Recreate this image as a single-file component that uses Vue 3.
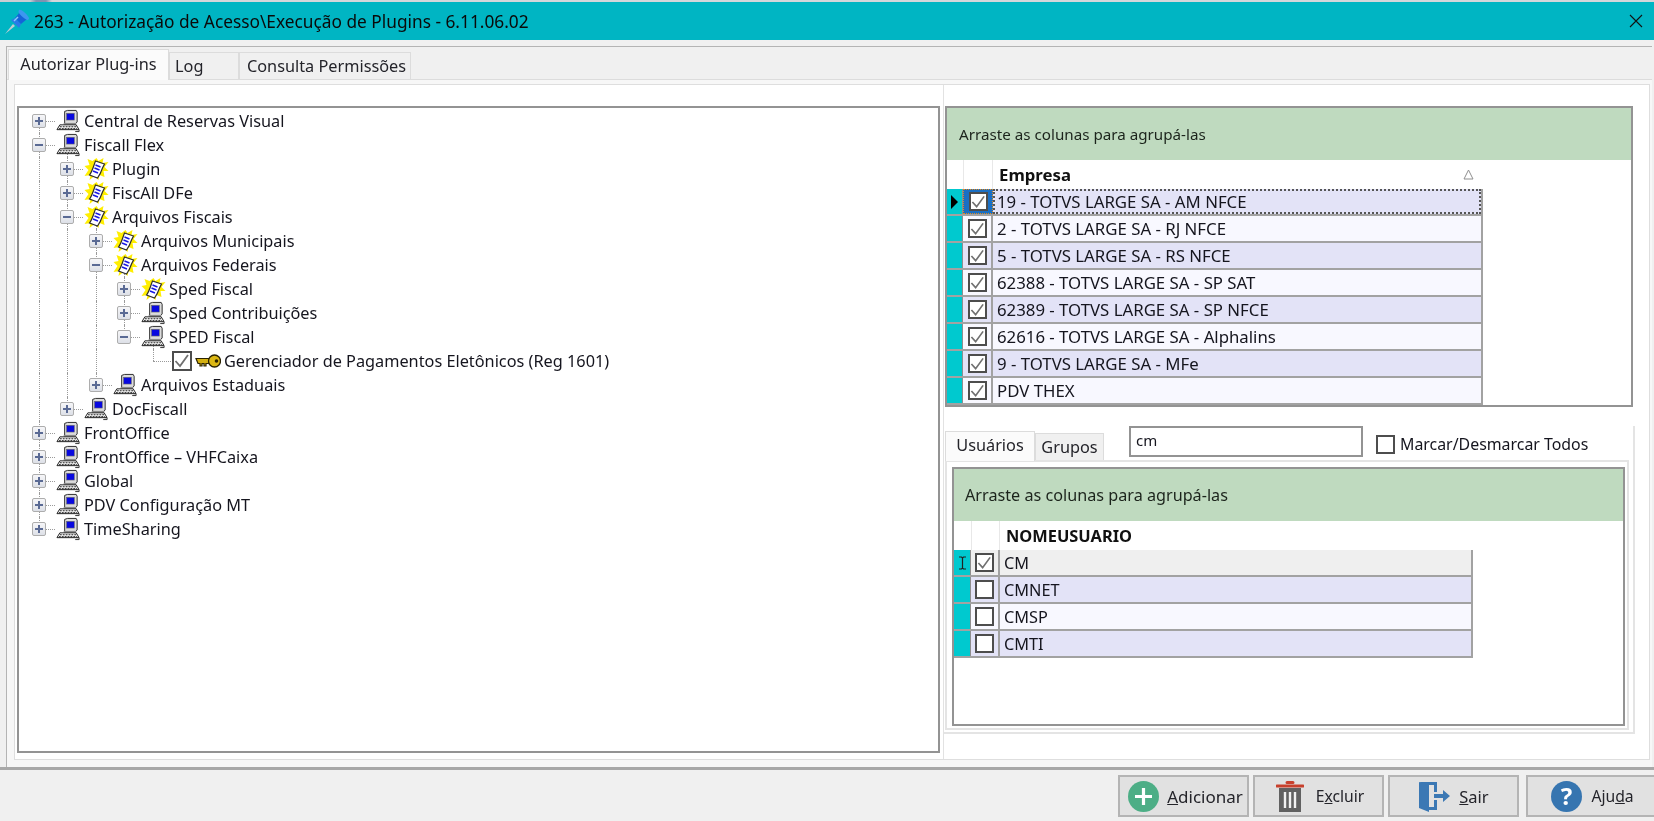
<script setup>
import { computed } from 'vue'

// level, label, icon, state: '+' closed, '-' open, 'leaf' = checkbox + key
const nodes = [
  { level: 0, label: 'Central de Reservas Visual', icon: 'pc', state: '+' },
  { level: 0, label: 'Fiscall Flex', icon: 'pc', state: '-' },
  { level: 1, label: 'Plugin', icon: 'doc', state: '+' },
  { level: 1, label: 'FiscAll DFe', icon: 'doc', state: '+' },
  { level: 1, label: 'Arquivos Fiscais', icon: 'doc', state: '-' },
  { level: 2, label: 'Arquivos Municipais', icon: 'doc', state: '+' },
  { level: 2, label: 'Arquivos Federais', icon: 'doc', state: '-' },
  { level: 3, label: 'Sped Fiscal', icon: 'doc', state: '+' },
  { level: 3, label: 'Sped Contribuições', icon: 'pc', state: '+' },
  { level: 3, label: 'SPED Fiscal', icon: 'pc', state: '-' },
  { level: 4, label: 'Gerenciador de Pagamentos Eletônicos (Reg 1601)', icon: 'key', state: 'leaf' },
  { level: 2, label: 'Arquivos Estaduais', icon: 'pc', state: '+' },
  { level: 1, label: 'DocFiscall', icon: 'pc', state: '+' },
  { level: 0, label: 'FrontOffice', icon: 'pc', state: '+' },
  { level: 0, label: 'FrontOffice – VHFCaixa', icon: 'pc', state: '+' },
  { level: 0, label: 'Global', icon: 'pc', state: '+' },
  { level: 0, label: 'PDV Configuração MT', icon: 'pc', state: '+' },
  { level: 0, label: 'TimeSharing', icon: 'pc', state: '+' }
]

const levelX = (l) => Math.floor(20 + 28.5 * l)

const hasNextSibling = (i, level) => {
  for (let j = i + 1; j < nodes.length; j++) {
    if (nodes[j].level < level) return false
    if (nodes[j].level === level) return true
  }
  return false
}

const rows = computed(() =>
  nodes.map((n, i) => {
    const guides = []
    for (let l = 0; l < n.level; l++) {
      if (hasNextSibling(i, l)) guides.push({ x: levelX(l), top: 0, h: 24 })
    }
    const next = hasNextSibling(i, n.level)
    guides.push({ x: levelX(n.level), top: i === 0 ? 12 : 0, h: next ? (i === 0 ? 12 : 24) : 12 })
    if (n.state === '-') guides.push({ x: levelX(n.level + 1), top: 12, h: 12 })
    return {
      ...n,
      guides,
      hx: levelX(n.level),
      hw: n.state === 'leaf' ? 20 : 16,
      pad: levelX(n.level) - (n.state === 'leaf' ? -19 : 7)
    }
  })
)

const empresas = [
  '19 - TOTVS LARGE SA - AM NFCE',
  '2 - TOTVS LARGE SA - RJ NFCE',
  '5 - TOTVS LARGE SA - RS NFCE',
  '62388 - TOTVS LARGE SA - SP SAT',
  '62389 - TOTVS LARGE SA - SP NFCE',
  '62616 - TOTVS LARGE SA - Alphalins',
  '9 - TOTVS LARGE SA - MFe',
  'PDV THEX'
]

const usuarios = [
  { nome: 'CM', on: true },
  { nome: 'CMNET', on: false },
  { nome: 'CMSP', on: false },
  { nome: 'CMTI', on: false }
]
</script>

<template>
  <div class="app">
    <svg class="defs" width="0" height="0">
      <symbol id="pc" viewBox="0 0 26 24">
        <path d="M9 2l3-1h9l1 2v10l-2 2H9z" fill="#dcdcdc" stroke="#2a2a2a" stroke-width="1" />
        <rect x="11" y="4" width="8" height="7" fill="#0808e0" stroke="#666" stroke-width=".6" />
        <rect x="8" y="14" width="13" height="2" fill="#8a8a8a" />
        <path d="M4 16h17l3 5H1z" fill="#fff" stroke="#1c1c1c" stroke-width="1" />
        <path d="M4 18h17M3 20h19" stroke="#111" stroke-width="1" stroke-dasharray="2 1" />
        <path d="M21 21c3 0 4 1 3 2h-4" fill="#e8e8e8" stroke="#333" stroke-width="1" />
      </symbol>
      <symbol id="doc" viewBox="0 0 24 24">
        <path d="M12 1l2 3 5-3-1 5 6-1-4 5 4 4-5 0 1 6-5-2-1 5-4-4-5 4 1-5-6 1 4-6-4-4 5-1-2-6 5 2z" fill="#ffee00" />
        <path d="M11 4l9 3-2 4c-1 3-2 6-5 10l-8-3c3-4 4-9 6-14z" fill="#fff" stroke="#2c2c2c" stroke-width="1.200" />
        <path d="M11 8l5 2M10 11l5 2M8.500 14l5 2" stroke="#1818e0" stroke-width="1.400" fill="none" />
      </symbol>
      <symbol id="key" viewBox="0 0 26 14">
        <path d="M1 4.500h13v5h-3v2.500H9V9.500H7V12H5V9.500H3z" fill="#d4b010" stroke="#2a2200" stroke-width="1.200" />
        <circle cx="19.500" cy="7" r="6" fill="#dcb814" stroke="#2a2200" stroke-width="1.300" />
        <circle cx="21.500" cy="7" r="1.800" fill="#2a2200" />
      </symbol>
      <symbol id="check" viewBox="0 0 16 16">
        <path d="M1.500 8l4.500 5L14 2" fill="none" stroke="#707070" stroke-width="1.800" />
      </symbol>
    </svg>

    <div class="strip"></div>
    <header class="titlebar">
      <svg class="pin" width="25" height="25" viewBox="0 0 25 25">
        <path d="M0 25l8-10 2 2z" fill="#c2ccd2" />
        <path d="M6 11l8 8 2-4-6-6z" fill="#2a7be8" />
        <path d="M10 9l5-6 7 7-6 5z" fill="#1464d8" />
        <path d="M14 1c2-2 9 5 10 8 0 3-3 2-5 0s-7-5-5-8z" fill="#3d97f0" />
        <path d="M9 12l4-4" stroke="#8cc8fa" stroke-width="1.400" />
      </svg>
      <span class="title">263 - Autorização de Acesso\Execução de Plugins - 6.11.06.02</span>
      <svg class="close" width="14" height="14" viewBox="0 0 14 14">
        <path d="M1 1l12 12M13 1L1 13" stroke="#111" stroke-width="1.100" />
      </svg>
    </header>

    <div class="frame">
      <div class="tabs">
        <div class="tab active">Autorizar Plug-ins</div>
        <div class="tab log">Log</div>
        <div class="tab perm">Consulta Permissões</div>
      </div>
      <div class="page">
        <div class="sheet">
          <div class="tree">
            <div v-for="r in rows" :key="r.label" class="node" :style="{ paddingLeft: r.pad + 'px' }">
              <i v-for="(g, k) in r.guides" :key="k" class="vline" :style="{ left: g.x + 'px', top: g.top + 'px', height: g.h + 'px' }"></i>
              <i class="hline" :style="{ left: r.hx + 'px', width: r.hw + 'px' }"></i>
              <template v-if="r.state === 'leaf'">
                <span class="cb leaf-cb"><svg width="16" height="16"><use href="#check" /></svg></span>
                <svg class="key" width="26" height="14"><use href="#key" /></svg>
              </template>
              <template v-else>
                <span class="exp">
                  <i class="h"></i>
                  <i v-if="r.state === '+'" class="v"></i>
                </span>
                <svg class="ico" :class="r.icon" width="25" height="24"><use :href="'#' + r.icon" /></svg>
              </template>
              <span class="label">{{ r.label }}</span>
            </div>
          </div>

          <div class="right">
            <section class="grid top-grid">
              <div class="groupbar">Arraste as colunas para agrupá-las</div>
              <div class="g-head emp">
                <span></span><span class="sep"></span>
                <b>Empresa</b>
                <svg class="sort" width="11" height="11" viewBox="0 0 11 11">
                  <path d="M5.500 1L10 10H1z" fill="#fff" stroke="#8f8f8f" />
                </svg>
              </div>
              <div v-for="(e, i) in empresas" :key="e" class="g-row emp" :class="{ alt: i % 2 === 0, focus: i === 0 }">
                <span class="ind"><i v-if="i === 0" class="arrow"></i></span>
                <span class="chk"><span class="cb"><svg width="16" height="16"><use href="#check" /></svg></span></span>
                <span class="txt">{{ e }}</span>
              </div>
            </section>

            <div class="lower">
              <div class="lower-bar">
                <div class="tab sub active">Usuários</div>
                <div class="tab sub grupos">Grupos</div>
                <div class="search">cm</div>
                <label class="all"><span class="cb"></span>Marcar/Desmarcar Todos</label>
              </div>
              <div class="lower-page">
                <section class="grid users">
                  <div class="groupbar">Arraste as colunas para agrupá-las</div>
                  <div class="g-head usr">
                    <span></span><span class="sep"></span>
                    <b>NOMEUSUARIO</b>
                  </div>
                  <div v-for="(u, i) in usuarios" :key="u.nome" class="g-row usr" :class="{ alt: i % 2 === 1, cur: i === 0 }">
                    <span class="ind">
                      <svg v-if="i === 0" width="9" height="14" viewBox="0 0 9 14">
                        <path d="M1 1h2.500l1 1 1-1H8M4.500 2v10M1 13h2.500l1-1 1 1H8" fill="none" stroke="#222" stroke-width="1.200" />
                      </svg>
                    </span>
                    <span class="chk"><span class="cb"><svg v-if="u.on" width="16" height="16"><use href="#check" /></svg></span></span>
                    <span class="txt">{{ u.nome }}</span>
                  </div>
                </section>
              </div>
            </div>
          </div>
        </div>
      </div>
    </div>

    <footer class="footer">
      <button class="btn wide">
        <svg width="31" height="31" viewBox="0 0 31 31">
          <circle cx="15.500" cy="15.500" r="15.500" fill="#4dae86" />
          <path d="M15.500 7v17M7 15.500h17" stroke="#fff" stroke-width="3.200" />
        </svg>
        <span><u>A</u>dicionar</span>
      </button>
      <button class="btn">
        <svg width="28" height="33" viewBox="0 0 28 33">
          <path d="M11 2.500h6M1 6h26" stroke="#c8402c" stroke-width="3" stroke-linecap="round" />
          <path d="M3 8h22v24H3z" fill="#616161" />
          <path d="M9 12v16M14 12v16M19 12v16" stroke="#f1f1f1" stroke-width="2.400" />
        </svg>
        <span>E<u>x</u>cluir</span>
      </button>
      <button class="btn">
        <svg width="32" height="34" viewBox="0 0 32 34">
          <path d="M2 3h17v10h-3V6H10v22h6v-7h3v10H10z" fill="#3b78b4" />
          <path d="M1 3l10 3v27l-10-4z" fill="#3b78b4" />
          <path d="M16 15h9v-4l7 6-7 6v-4h-9z" fill="#3b78b4" />
        </svg>
        <span><u>S</u>air</span>
      </button>
      <button class="btn last">
        <svg width="31" height="31" viewBox="0 0 31 31">
          <circle cx="15.500" cy="15.500" r="15.500" fill="#3675b0" />
          <text x="15.500" y="23.500" text-anchor="middle" class="qm">?</text>
        </svg>
        <span>Aju<u>d</u>a</span>
      </button>
    </footer>
  </div>
</template>

<style>
html, body { margin: 0; overflow: hidden; }
</style>

<style scoped>
.app {
  height: 821px;
  width: 1654px;
  display: flex;
  flex-direction: column;
  background: #f0f0f0;
  font-family: "Noto Sans", "DejaVu Sans", sans-serif;
  font-size: 16.300px;
  color: #15151e;
  overflow: hidden;
  filter: blur(.35px);
}
.defs { position: absolute; }
.strip {
  height: 2px;
  background: linear-gradient(90deg, #c9cdd2 0, #c9cdd2 30px, #7f93b0 36px, #7f93b0 46px, #d4d6da 52px, #d4d6da 1654px);
}
.titlebar {
  height: 38px;
  flex: none;
  display: flex;
  align-items: center;
  background: #00b5c3;
  padding: 0 11px 0 5px;
}
.pin { margin-right: 4px; }
.title { font-size: 17.300px; color: #0a0a0a; white-space: nowrap; }
.close { margin-left: auto; }

.frame {
  flex: 1;
  min-height: 0;
  margin: 6px 2px 0 6px;
  border-top: 1px solid #b4b4b4;
  border-left: 1px solid #b4b4b4;
  display: flex;
  flex-direction: column;
  padding-top: 1px;
}
.tabs { height: 31px; flex: none; display: flex; align-items: flex-end; padding-left: 1px; }
.tab {
  height: 27px;
  box-sizing: border-box;
  border: 1px solid #dcdcdc;
  border-bottom: 0;
  background: #f0f0f0;
  color: #24242a;
  display: flex;
  align-items: center;
  justify-content: center;
  white-space: nowrap;
}
.tab.active { height: 31px; width: 161px; background: #fbfbfb; padding-bottom: 3px; margin-bottom: -1px; position: relative; }
.tab.log { width: 70px; justify-content: flex-start; padding-left: 5px; }
.tab.perm { width: 172px; padding-left: 3px; }
.page {
  flex: 1;
  min-height: 0;
  display: flex;
  background: #f7f7f7;
  border-top: 1px solid #dcdcdc;
  padding: 4px 2px 7px 7px;
}
.sheet {
  flex: 1;
  min-width: 0;
  display: flex;
  background: #fff;
  border: 1px solid #dedede;
  padding: 21px 0 6px 2px;
}

.tree {
  width: 923px;
  flex: none;
  box-sizing: border-box;
  border: 2px solid #939393;
  background: #fff;
  padding-top: 1px;
}
.node {
  position: relative;
  height: 24px;
  display: flex;
  align-items: center;
  white-space: nowrap;
}
.vline { position: absolute; border-left: 1px dotted #9a9a9a; }
.hline { position: absolute; top: 12px; border-top: 1px dotted #9a9a9a; }
.exp {
  position: relative;
  width: 14px;
  height: 14px;
  box-sizing: border-box;
  border: 1.500px solid #adadad;
  border-radius: 2px;
  background: linear-gradient(#f6f6f8, #dde0e7);
  margin-right: 10px;
  flex: none;
}
.exp .h { position: absolute; left: 2px; right: 2px; top: 4.500px; height: 2px; background: #5a6a94; }
.exp .v { position: absolute; top: 2px; bottom: 2px; left: 4.500px; width: 2px; background: #5a6a94; }
.ico { flex: none; position: relative; margin-right: 3px; }
.label { position: relative; }
.cb {
  display: inline-flex;
  align-items: center;
  justify-content: center;
  width: 19px;
  height: 19px;
  box-sizing: border-box;
  border: 2px solid #4d4d4d;
  background: #fff;
  flex: none;
}
.leaf-cb { position: relative; width: 20px; height: 20px; }
.key { position: relative; margin: 0 3px 0 3px; flex: none; }

.right {
  flex: 1;
  min-width: 0;
  box-sizing: border-box;
  margin: -21px 0 -6px 3px;
  padding: 21px 16px 0 1px;
  border-left: 1px solid #e2e2e2;
}
.grid {
  box-sizing: border-box;
  border: 2px solid #939393;
  background: #fff;
}
.top-grid { height: 301px; }
.groupbar {
  background: #bfdabf;
  display: flex;
  align-items: center;
  color: #1c241c;
}
.top-grid .groupbar { height: 52px; padding-left: 12px; font-size: 15.200px; }
.users .groupbar { height: 52px; padding-left: 11px; font-size: 16.200px; }
.g-head, .g-row { display: grid; align-items: stretch; white-space: nowrap; }
.emp { grid-template-columns: 16px 30px 1fr; width: 536px; }
.usr { grid-template-columns: 17px 29px 1fr; width: 519px; }
.g-head { height: 29px; position: relative; }
.g-head b { color: #111; display: flex; align-items: center; padding-left: 6px; }
.g-head.emp b { font-size: 16.800px; }
.g-head.usr b { font-size: 16.400px; }
.g-head .sep { border-left: 1px solid #e8e8e8; border-right: 1px solid #e8e8e8; }
.sort { position: absolute; right: 9px; top: 9px; }
.g-row {
  height: 27px;
  box-sizing: border-box;
  background: #f8f8ff;
  border-bottom: 2px solid #a2a2a2;
  border-right: 2px solid #a2a2a2;
}
.g-row.alt { background: #e3e3f7; }
.g-row.cur { background: #efefef; }
.ind {
  background: #00c9cf;
  border-right: 1px solid #8e8e8e;
  display: flex;
  align-items: center;
  justify-content: center;
}
.arrow {
  width: 0;
  height: 0;
  border-left: 7px solid #000;
  border-top: 7px solid transparent;
  border-bottom: 7px solid transparent;
}
.chk {
  display: flex;
  align-items: center;
  justify-content: center;
  border-right: 2px solid #a2a2a2;
}
.txt { display: flex; align-items: center; padding-left: 4px; font-size: 16.800px; }
.usr .txt { padding-left: 4px; font-size: 16.300px; }
.g-row.focus .chk { background: #1a6fc4; outline: 1px dotted #e08a20; outline-offset: -1px; border-right: 0; }
.g-row.focus .txt { outline: 2px dotted #555; outline-offset: -2px; }

.lower {
  margin-top: 19px;
  margin-left: -1px;
  width: 691px;
  height: 308px;
  box-sizing: border-box;
  border-right: 2px solid #e4e4e4;
  border-bottom: 2px solid #e4e4e4;
}
.lower-bar { height: 34px; display: flex; align-items: flex-end; position: relative; }
.tab.sub { height: 27px; width: 69px; }
.tab.sub.active { height: 30px; width: 90px; margin-left: 1px; }
.search {
  align-self: flex-start;
  box-sizing: border-box;
  margin-left: 25px;
  width: 234px;
  height: 31px;
  border: 2px solid #939393;
  background: #fff;
  padding: 0 5px;
  line-height: 24px;
  font-size: 15px;
}
.all {
  align-self: flex-start;
  display: flex;
  align-items: center;
  margin: 7px 0 0 13px;
  gap: 5px;
  white-space: nowrap;
  font-size: 15.900px;
}
.lower-page {
  box-sizing: border-box;
  margin-left: 1px;
  width: 684px;
  height: 270px;
  border: 2px solid #e4e4e4;
  padding: 5px 2px 2px 5px;
}
.users { width: 673px; height: 259px; }

.footer {
  flex: none;
  height: 54px;
  box-sizing: border-box;
  border-top: 3px solid #a8a8a8;
  background: #f0f0f0;
  display: flex;
  gap: 4px;
  padding: 5px 0 0 1118px;
}
.btn {
  width: 131px;
  height: 42px;
  flex: none;
  box-sizing: border-box;
  background: #e1e1e1;
  border: 2px solid #b4b4b4;
  display: flex;
  align-items: center;
  justify-content: center;
  gap: 9px;
  padding: 0;
  font: inherit;
  font-size: 15.700px;
  color: #24242a;
}
.btn.wide { font-size: 17px; gap: 8px; padding-left: 4px; }
.btn:nth-child(2) { gap: 12px; padding-left: 3px; }
.btn:nth-child(3) { margin-right: 3px; font-size: 16.500px; }
.btn.last { width: 128px; border-right: 0; padding-left: 3px; }
.qm { font: 700 24px "Noto Sans", sans-serif; fill: #fff; }
</style>
